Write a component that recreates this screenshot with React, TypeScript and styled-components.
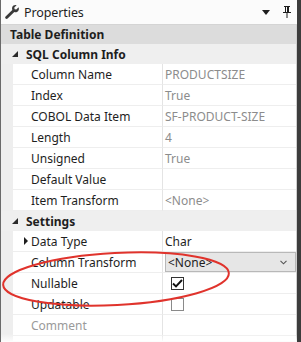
import styled, { createGlobalStyle } from "styled-components";

const GlobalStyle = createGlobalStyle`
  html, body {
    margin: 0;
    padding: 0;
    background: #ffffff;
  }
  body {
    font-family: "Noto Sans", "Open Sans", sans-serif;
  }
`;

const Frame = styled.div`
  position: relative;
  width: 301px;
  height: 342px;
  overflow: hidden;
  box-sizing: border-box;
  border-left: 1px solid #6a6a6a;
  border-right: 4px solid #3c3c3c;
  background: #eeeeee;
  display: flex;
  flex-direction: column;
`;

const TitleBar = styled.div`
  height: 24px;
  flex: none;
  display: flex;
  align-items: center;
  background: #fbfbfb;
  padding: 0 6px 0 3px;
  gap: 4px;
`;

const Title = styled.span`
  flex: 1;
  font-size: 12.5px;
  color: #1e1e1e;
  letter-spacing: -0.1px;
`;

const TitleTools = styled.div`
  display: flex;
  align-items: center;
  gap: 13px;
`;

const Grid = styled.div`
  flex: 1;
  display: flex;
  flex-direction: column;
  border-right: 1px solid #cfcfcf;
  border-top: 1px solid #d4d4d4;
`;

const HeaderRow = styled.div`
  height: 19px;
  flex: none;
  display: flex;
  align-items: center;
  padding-left: 9px;
  background: #dcdcdc;
  font-size: 12px;
  font-weight: 700;
  color: #1e1e1e;
`;

const CategoryRow = styled.div`
  height: 20px;
  flex: none;
  display: flex;
  align-items: center;
  background: #efefef;
  font-size: 12px;
  font-weight: 700;
  color: #1e1e1e;
`;

const CategoryToggle = styled.span`
  width: 25px;
  display: flex;
  justify-content: flex-start;
  padding-left: 11px;
  box-sizing: border-box;
`;

const Row = styled.div`
  height: 21px;
  flex: none;
  display: flex;
`;

const Gutter = styled.div`
  width: 12px;
  flex: none;
  background: #eeeeee;
`;

const Cell = styled.div`
  display: flex;
  align-items: center;
  background: #ffffff;
  border-bottom: 1px solid #eeeeee;
  box-sizing: border-box;
  font-size: 12px;
`;

const NameCell = styled(Cell)<{ $disabled?: boolean; $expandable?: boolean }>`
  width: 150px;
  flex: none;
  padding-left: ${(p) => (p.$expandable ? "11px" : "18px")};
  border-right: 1px solid #e4e4e4;
  color: ${(p) => (p.$disabled ? "#9a9a9a" : "#1e1e1e")};
`;

const Expander = styled.span`
  width: 7px;
  display: flex;
  align-items: center;
`;

const ValueCell = styled(Cell)<{ $muted?: boolean }>`
  flex: 1;
  padding-left: 2px;
  color: ${(p) => (p.$muted ? "#8c8c8c" : "#1e1e1e")};
`;

const Dropdown = styled.div`
  flex: 1;
  align-self: stretch;
  display: flex;
  align-items: center;
  justify-content: space-between;
  padding: 0 8px 0 2px;
  background: #e6e6e6;
  border: 1px solid #b8b8b8;
  color: #1e1e1e;
`;

const Checkbox = styled.span<{ $checked?: boolean }>`
  width: 13px;
  height: 13px;
  margin-left: 6px;
  box-sizing: border-box;
  border: 1px solid ${(p) => (p.$checked ? "#333333" : "#8a8a8a")};
  background: #ffffff;
  display: flex;
  align-items: center;
  justify-content: center;
`;

const Filler = styled.div`
  flex: 1;
  display: flex;
`;

const Ellipse = styled.svg`
  position: absolute;
  left: 0;
  top: 0;
  pointer-events: none;
`;

const BottomFade = styled.div`
  position: absolute;
  left: 0;
  right: 0;
  bottom: 0;
  height: 8px;
  background: linear-gradient(rgba(255, 255, 255, 0), rgba(255, 255, 255, 0.9));
  pointer-events: none;
`;

const Wrench = () => (
  <svg width="16" height="16" viewBox="0 0 16 16">
    <path
      d="M14.6 3.2 12.3 5.5 10.6 5.2 10.3 3.5 12.6 1.2C10.8.6 8.8 1.5 8.2 3.3 7.9 4.2 8 5.1 8.3 5.9L1.6 12.6C1 13.2 1 14.1 1.6 14.6 2.1 15.2 3 15.2 3.6 14.6L10.3 7.9C11.1 8.2 12 8.3 12.9 8 14.7 7.4 15.4 5 14.6 3.2Z"
      fill="#3a3a3a"
    />
  </svg>
);

const DownArrow = () => (
  <svg width="8" height="5" viewBox="0 0 8 5">
    <path d="M0 0H8L4 5Z" fill="#1e1e1e" />
  </svg>
);

const Pin = () => (
  <svg width="8" height="12" viewBox="0 0 8 12">
    <path d="M1 0H7V1H6V6H8V7H4.5V12H3.5V7H0V6H2V1H1Z" fill="#1e1e1e" />
    <rect x="3" y="1" width="1" height="5" fill="#fbfbfb" />
  </svg>
);

const Collapse = () => (
  <svg width="6" height="6" viewBox="0 0 6 6">
    <path d="M6 0V6H0Z" fill="#2a2a2a" />
  </svg>
);

const Expand = () => (
  <svg width="4" height="8" viewBox="0 0 4 8">
    <path d="M0 0L4 4L0 8Z" fill="#1e1e1e" />
  </svg>
);

const Chevron = () => (
  <svg width="7" height="5" viewBox="0 0 7 5">
    <path d="M0.5 0.8 3.5 3.8 6.5 0.8" fill="none" stroke="#555" strokeWidth="1.1" />
  </svg>
);

const Tick = () => (
  <svg width="11" height="9" viewBox="0 0 11 9">
    <path d="M1 4.5 4 7.5 10 1" fill="none" stroke="#111" strokeWidth="1.9" />
  </svg>
);

type Prop = { name: string; value?: string; muted?: boolean };

const sqlProps: Prop[] = [
  { name: "Column Name", value: "PRODUCTSIZE", muted: true },
  { name: "Index", value: "True", muted: true },
  { name: "COBOL Data Item", value: "SF-PRODUCT-SIZE", muted: true },
  { name: "Length", value: "4", muted: true },
  { name: "Unsigned", value: "True", muted: true },
  { name: "Default Value", value: "" },
  { name: "Item Transform", value: "<None>", muted: true },
];

export default function App() {
  return (
    <>
      <GlobalStyle />
      <Frame>
        <TitleBar>
          <Wrench />
          <Title>Properties</Title>
          <TitleTools>
            <DownArrow />
            <Pin />
          </TitleTools>
        </TitleBar>
        <Grid>
          <HeaderRow>Table Definition</HeaderRow>
          <CategoryRow>
            <CategoryToggle>
              <Collapse />
            </CategoryToggle>
            SQL Column Info
          </CategoryRow>
          {sqlProps.map((p) => (
            <Row key={p.name}>
              <Gutter />
              <NameCell>{p.name}</NameCell>
              <ValueCell $muted={p.muted}>{p.value}</ValueCell>
            </Row>
          ))}
          <CategoryRow>
            <CategoryToggle>
              <Collapse />
            </CategoryToggle>
            Settings
          </CategoryRow>
          <Row>
            <Gutter />
            <NameCell $expandable>
              <Expander>
                <Expand />
              </Expander>
              Data Type
            </NameCell>
            <ValueCell>Char</ValueCell>
          </Row>
          <Row>
            <Gutter />
            <NameCell>Column Transform</NameCell>
            <ValueCell>
              <Dropdown>
                <span>&lt;None&gt;</span>
                <Chevron />
              </Dropdown>
            </ValueCell>
          </Row>
          <Row>
            <Gutter />
            <NameCell>Nullable</NameCell>
            <ValueCell>
              <Checkbox $checked>
                <Tick />
              </Checkbox>
            </ValueCell>
          </Row>
          <Row>
            <Gutter />
            <NameCell>Updatable</NameCell>
            <ValueCell>
              <Checkbox />
            </ValueCell>
          </Row>
          <Row>
            <Gutter />
            <NameCell $disabled>Comment</NameCell>
            <ValueCell />
          </Row>
          <Filler>
            <Gutter />
            <NameCell />
            <ValueCell />
          </Filler>
        </Grid>
        <Ellipse width="301" height="342">
          <ellipse
            cx="115"
            cy="279"
            rx="113"
            ry="26"
            fill="none"
            stroke="#e0332c"
            strokeWidth="2"
            transform="rotate(-3 115 279)"
          />
        </Ellipse>
        <BottomFade />
      </Frame>
    </>
  );
}
